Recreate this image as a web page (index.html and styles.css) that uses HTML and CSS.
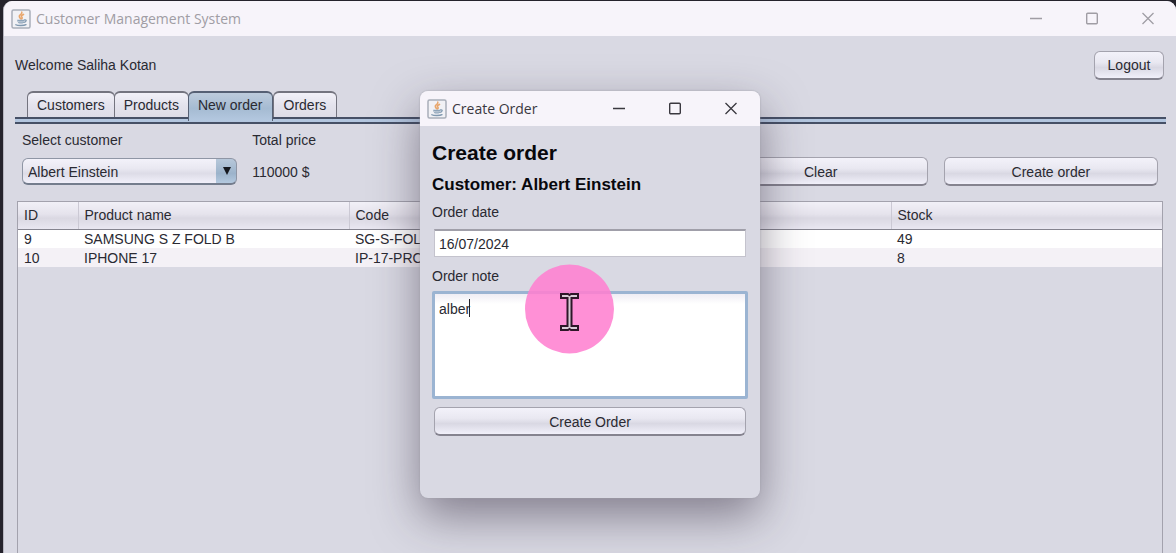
FILE: index.html
```
<!DOCTYPE html>
<html lang="en">
<head>
<meta charset="utf-8">
<title>Customer Management System</title>
<link rel="stylesheet" href="styles.css">
</head>
<body>
<svg class="defs" aria-hidden="true">
  <symbol id="java" viewBox="0 0 20 20">
    <rect x="1" y="1" width="18" height="18" rx="1.5" fill="#f1f1f5" stroke="#a9aeb9" stroke-width="1.5"/>
    <path d="M10.800 3.200c1.100 1.600-3.300 2.700-2.500 4.500.2.900 1.200 1.300 1.400 2.100M12.500 5.400c-2 .9-2.700 1.800-1.600 2.900.5.600.2 1.100-.4 1.500" fill="none" stroke="#e8a66c" stroke-width="1.600" stroke-linecap="round"/>
    <path d="M6.200 10.700h7.200c0 2-1 3.700-2.200 3.900H8.500c-1.300-.2-2.300-1.900-2.300-3.900z" fill="#8ea4b9"/>
    <path d="M13.600 10.900c2.200-.5 2.100 2-.7 2.400M4.800 15.700c2 1.100 8.200 1.100 10.200-.1" fill="none" stroke="#7f98af" stroke-width="1.300" stroke-linecap="round"/>
    <path d="M6.800 12.500c1.800.500 4.500.500 6 0" fill="none" stroke="#dfe5ec" stroke-width=".7"/>
  </symbol>
  <symbol id="min" viewBox="0 0 14 14"><path d="M1 6.500h12" fill="none" stroke="currentColor" stroke-width="1.300"/></symbol>
  <symbol id="max" viewBox="0 0 14 14"><rect x="1.700" y="1.200" width="10.600" height="10.600" rx="1" fill="none" stroke="currentColor" stroke-width="1.400"/></symbol>
  <symbol id="close" viewBox="0 0 14 14"><path d="M1.500 1l11 11M12.500 1l-11 11" fill="none" stroke="currentColor" stroke-width="1.300"/></symbol>
</svg>

<div class="window">
  <header class="titlebar titlebar-inactive">
    <svg class="app-icon"><use href="#java"/></svg>
    <span class="window-title">Customer Management System</span>
    <button class="win-btn" aria-label="Minimize"><svg><use href="#min"/></svg></button>
    <button class="win-btn" aria-label="Maximize"><svg><use href="#max"/></svg></button>
    <button class="win-btn" aria-label="Close"><svg><use href="#close"/></svg></button>
  </header>

  <main class="content">
    <div class="welcome">
      <span>Welcome Saliha Kotan</span>
      <button class="btn logout">Logout</button>
    </div>

    <nav class="tabs" role="tablist">
      <button class="tab" role="tab">Customers</button>
      <button class="tab" role="tab">Products</button>
      <button class="tab tab-selected" role="tab" aria-selected="true">New order</button>
      <button class="tab" role="tab">Orders</button>
    </nav>
    <div class="tab-line"></div>

    <section class="toolbar">
      <div class="cell cell-customer">
        <label for="customer">Select customer</label>
        <div class="combo">
          <select id="customer"><option>Albert Einstein</option></select>
          <svg class="combo-arrow" viewBox="0 0 8 8"><path d="M0 0h8L4 8z" fill="#15181f"/></svg>
        </div>
      </div>
      <div class="cell cell-total">
        <span>Total price</span>
        <output class="total">110000 $</output>
      </div>
      <div class="cell cell-clear"><button class="btn">Clear</button></div>
      <div class="cell cell-create"><button class="btn">Create order</button></div>
    </section>

    <div class="table-pane">
      <table>
        <colgroup><col class="col-id"><col><col><col><col></colgroup>
        <thead>
          <tr><th>ID</th><th>Product name</th><th>Code</th><th></th><th>Stock</th></tr>
        </thead>
        <tbody>
          <tr><td>9</td><td>SAMSUNG S Z FOLD B</td><td>SG-S-FOLD</td><td></td><td>49</td></tr>
          <tr><td>10</td><td>IPHONE 17</td><td>IP-17-PRO</td><td></td><td>8</td></tr>
        </tbody>
      </table>
    </div>
  </main>
</div>

<div class="dialog" role="dialog" aria-labelledby="dialog-title">
  <header class="titlebar titlebar-dialog">
    <svg class="app-icon"><use href="#java"/></svg>
    <span class="window-title" id="dialog-title">Create Order</span>
    <button class="win-btn" aria-label="Minimize"><svg><use href="#min"/></svg></button>
    <button class="win-btn" aria-label="Maximize"><svg><use href="#max"/></svg></button>
    <button class="win-btn" aria-label="Close"><svg><use href="#close"/></svg></button>
  </header>
  <form class="form">
    <h1>Create order</h1>
    <h2>Customer: Albert Einstein</h2>
    <label for="date">Order date</label>
    <input id="date" class="date" type="text" value="16/07/2024">
    <label for="note">Order note</label>
    <div class="note-wrap">
      <textarea id="note" class="note">alber</textarea>
      <span class="caret"></span>
    </div>
    <button class="btn submit" type="button">Create Order</button>
  </form>
</div>

<svg class="pointer" viewBox="0 0 90 90" aria-hidden="true">
  <circle cx="44.500" cy="45" r="44.500" fill="#ff80d0" fill-opacity=".87"/>
  <path d="M36 30h7l1.500 1 1.500-1h7v4h-6.500v28H53v4h-7l-1.500-1-1.500 1h-7v-4h6.500V34H36z" fill="#d9ccd6" stroke="#2e1728" stroke-width="2"/>
</svg>
</body>
</html>
```
FILE: styles.css
```
* { box-sizing: border-box; }

body {
  margin: 0;
  height: 100vh;
  overflow: hidden;
  padding: 1px 0 0 3px;
  background: #25232c;
  color: #2a2a32;
  font: 14px/18px "Liberation Sans", Arial, sans-serif;
}

button, input, select, textarea {
  font: inherit;
  color: inherit;
  margin: 0;
}

.defs { position: absolute; width: 0; height: 0; }

.window {
  display: flex;
  flex-direction: column;
  height: 100%;
  background: #d9d9e3;
  border-left: 1px solid #b6b5bf;
  border-radius: 9px 9px 0 0;
  overflow: hidden;
}

.titlebar {
  display: flex;
  align-items: center;
  height: 35px;
  flex: none;
  padding-left: 7px;
  background: #f7f4fa;
  color: #3a383f;
  font-family: "Open Sans", "Noto Sans", sans-serif;
}
.titlebar-inactive { color: #a09da4; }
.titlebar-dialog { padding-right: 1px; }
.app-icon { width: 20px; height: 20px; }
.window-title { flex: 1; margin-left: 5px; }

.win-btn {
  display: grid;
  place-items: center;
  width: 56px;
  height: 100%;
  padding: 0;
  border: 0;
  background: none;
}
.win-btn svg { width: 14px; height: 14px; }

.content {
  flex: 1;
  display: flex;
  flex-direction: column;
  padding: 14px 10px 0 11px;
}

.btn {
  height: 29px;
  padding: 1px 0 0;
  border: 1px solid #a4a3ae;
  border-bottom: 2px solid #85838f;
  border-radius: 6px;
  background: linear-gradient(#f3f2fa, #e9e8f1 40%, #d9d8e3 60%, #f1f0fa);
}

.welcome {
  display: flex;
  align-items: center;
  justify-content: space-between;
  height: 30px;
}
.logout { width: 70px; margin-right: 2px; }

.tabs {
  display: flex;
  margin: 11px 0 0 12px;
  height: 26px;
}
.tab {
  padding: 0 9px;
  border: solid #74747f;
  border-width: 2px 1px 0;
  border-radius: 6px 6px 0 0;
  margin-right: -1px;
  background: linear-gradient(#f2f1f8, #e4e3ed 50%, #dddce7);
}
.tab:last-child { padding: 0 10px; }
.tab-selected {
  height: 30px;
  padding: 0 9px 4px;
  margin-right: 0;
  z-index: 1;
  border-color: #566074;
  background: linear-gradient(#bdcbdc, #a5bbd2 55%, #b4c8e0);
}
.tab-line {
  height: 7px;
  border: solid #465066;
  border-width: 2px 0;
  background: #b3c6df;
}

.toolbar {
  display: grid;
  grid-template-columns: repeat(5, 1fr);
  align-items: end;
  padding-top: 7px;
}
.cell {
  display: grid;
  grid-template-rows: 18px 29px;
  row-gap: 8px;
  align-items: center;
  padding: 0 8px;
}
.cell-customer, .cell-total { padding-left: 7px; }
.cell-clear { grid-column: 4; }
.cell-create { grid-column: 5; }
.cell .btn { grid-row: 2; }

.combo { position: relative; }
.combo select {
  display: block;
  width: 100%;
  height: 27px;
  padding: 1px 24px 0 5px;
  appearance: none;
  border: 1px solid #8f96a5;
  border-bottom: 2px solid #747d8d;
  border-radius: 6px;
  background:
    linear-gradient(#b7c8da, #9cb3cb 60%, #b4c9df) right / 20px 100% no-repeat,
    linear-gradient(#f3f2fa, #e9e8f1 40%, #dddce7 60%, #f1f0fa);
}
.combo-arrow {
  position: absolute;
  right: 6px;
  top: 9px;
  width: 8px;
  height: 8px;
  pointer-events: none;
}

.table-pane {
  flex: 1;
  margin: 15px 3px 0 2px;
  border: 1px solid #a3a2ad;
  border-width: 1px 1px 0;
}
table {
  width: 100%;
  table-layout: fixed;
  border-collapse: collapse;
}
.col-id { width: 60px; }
th, td { padding: 0 6px; text-align: left; font-weight: normal; }
th {
  height: 27px;
  border-right: 1px solid #cbc9d4;
  border-bottom: 1px solid #85848f;
  background: linear-gradient(#f1f0f7, #e5e3ec 45%, #dad8e2 60%, #e9e7f1);
}
th:last-child { border-right: 0; }
td { height: 19px; background: #fff; }
tr:nth-child(2) td { background: #f4f1f6; }

.dialog {
  position: absolute;
  left: 420px;
  top: 91px;
  width: 340px;
  height: 407px;
  border-radius: 8px;
  background: #d9d9e3;
  overflow: hidden;
  box-shadow: 0 0 2px #a09fa9, 0 18px 46px rgba(45, 35, 55, .5);
}

.form {
  display: flex;
  flex-direction: column;
  padding: 15px 12px;
}
h1, h2 { margin: 0; color: #08080c; font-weight: bold; }
h1 { font-size: 21px; line-height: 24px; }
h2 { margin: 11px 0 9px; font-size: 17px; line-height: 18px; }

.date {
  height: 28px;
  margin: 8px 2px 10px;
  padding: 0 4px;
  border: 1px solid #c4c3cd;
  border-top: 2px solid #a09fa9;
  background: #fff;
}
.note-wrap { position: relative; margin-top: 6px; }
.note {
  display: block;
  width: 100%;
  height: 108px;
  padding: 6px 4px;
  border: 3px solid #9bb4d2;
  border-radius: 2px;
  outline: 0;
  resize: none;
  background: linear-gradient(#efedf4, #fff 10px);
}
.caret {
  position: absolute;
  left: 37px;
  top: 8px;
  width: 1px;
  height: 18px;
  background: #23232b;
}
.submit { margin: 8px 2px 0; }

.pointer {
  position: absolute;
  left: 525px;
  top: 264px;
  width: 90px;
  height: 90px;
  pointer-events: none;
}
```
